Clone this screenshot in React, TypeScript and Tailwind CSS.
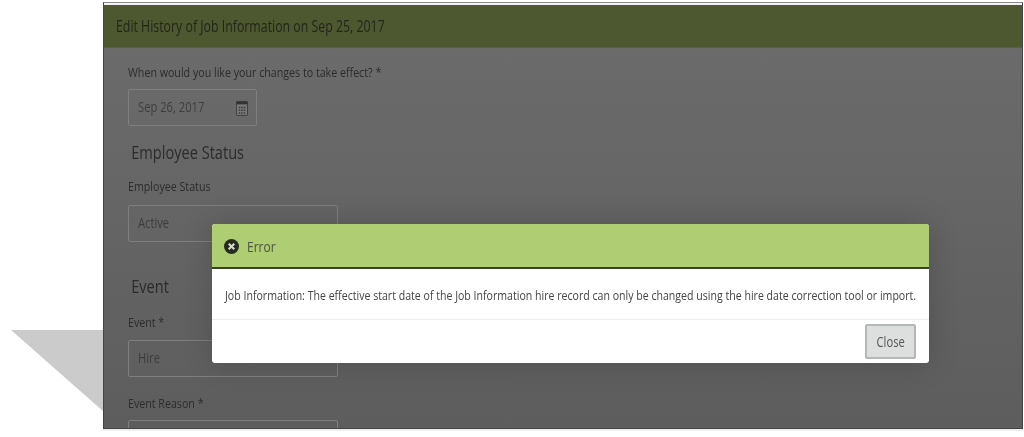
import React from 'react';

const FieldLabel: React.FC<{ text: string; className?: string }> = ({ text, className }) => (
  <div className={`h-[18px] text-[13.5px] leading-[18px] text-[#2c2c2c] whitespace-nowrap origin-left scale-x-[0.79] ${className ?? ''}`}>
    {text}
  </div>
);

const Field: React.FC<{ value: string; width: string; icon?: boolean }> = ({ value, width, icon }) => (
  <div className={`${width} h-[37px] shrink-0 flex items-center justify-between pl-[9px] pr-[8px] pb-[2px] border border-[#7f7f7f] rounded-[2px]`}>
    <span className="text-[14px] text-[#3d3d3d] whitespace-nowrap origin-left scale-x-[0.8]">{value}</span>
    {icon && (
      <svg width="12" height="15" viewBox="0 0 13 16" className="mt-[3px]">
        <rect x="0.5" y="0.5" width="12" height="15" rx="1" fill="#787878" stroke="#3a3a3a" />
        <rect x="0.5" y="0.5" width="12" height="3" fill="#333" />
        <path d="M3 6h1.6v1.6H3zM5.7 6h1.6v1.6H5.7zM8.4 6H10v1.6H8.4zM3 9h1.6v1.6H3zM5.7 9h1.6v1.6H5.7zM8.4 9H10v1.6H8.4zM3 12h1.6v1.6H3zM5.7 12h1.6v1.6H5.7zM8.4 12H10v1.6H8.4z" fill="#3a3a3a" />
      </svg>
    )}
  </div>
);

const SectionTitle: React.FC<{ text: string; className?: string }> = ({ text, className }) => (
  <div className={`pl-[4px] h-[24px] text-[18px] leading-[24px] text-[#2b2b2b] whitespace-nowrap origin-left scale-x-[0.81] ${className ?? ''}`}>
    {text}
  </div>
);

export default function App() {
  return (
    <div className="relative w-[1024px] h-[437px] overflow-hidden bg-white font-['Open_Sans',sans-serif]">
      {/* drop shadow wedge behind the picture */}
      <svg className="absolute left-0 top-0" width="104" height="437" viewBox="0 0 104 437">
        <polygon points="11,330 104,330 104,412" fill="#cbcbcb" />
      </svg>

      <div className="relative ml-[103px] mt-[2px] w-[920px] h-[427px] border-[1.5px] border-[#444444] border-t-[#8a8a8a] overflow-hidden flex flex-col shadow-[0_2px_0_#eeeeee]">
        <div className="h-[2px] shrink-0 bg-[#f2f2f2]" />
        <div className="h-[43px] shrink-0 flex items-center pl-[12px] pt-[1px] bg-[#4d5730] border-b border-[#5a5a55]">
          <span className="text-[15.5px] font-medium text-[#22261a] whitespace-nowrap origin-left scale-x-[0.796] blur-[0.3px]">
            Edit History of Job Information on Sep 25, 2017
          </span>
        </div>

        <div className="flex-1 flex flex-col pl-[24px] bg-gradient-to-b from-[#6b6b6b] to-[#5c5c5c] blur-[0.3px]">
          <FieldLabel text="When would you like your changes to take effect? *" className="mt-[15px]" />
          <div className="mt-[8px]">
            <Field value="Sep 26, 2017" width="w-[129px]" icon />
          </div>
          <SectionTitle text="Employee Status" className="mt-[14px]" />
          <FieldLabel text="Employee Status" className="mt-[13px]" />
          <div className="mt-[10px]">
            <Field value="Active" width="w-[210px]" />
          </div>
          <SectionTitle text="Event" className="mt-[32px]" />
          <FieldLabel text="Event *" className="mt-[15px]" />
          <div className="mt-[9px]">
            <Field value="Hire" width="w-[210px]" />
          </div>
          <FieldLabel text="Event Reason *" className="mt-[17px]" />
          <div className="mt-[8px]">
            <Field value="" width="w-[210px]" />
          </div>
        </div>

        {/* error dialog */}
        <div className="absolute left-[108px] top-[221px] w-[717px] h-[139px] rounded-[3px] overflow-hidden bg-white flex flex-col shadow-[0_0_30px_rgba(0,0,0,0.18)]">
          <div className="h-[45px] shrink-0 flex items-center pl-[12px] pt-[2px] gap-[8px] bg-[#afcd72] border-b-2 border-[#3b4327]">
            <svg width="15" height="15" viewBox="0 0 14 14">
              <circle cx="7" cy="7" r="7" fill="#262b22" />
              <path d="M4.4 4.4l5.2 5.2M9.6 4.4l-5.2 5.2" stroke="#d5dfc4" strokeWidth="1.9" />
            </svg>
            <span className="text-[15px] text-[#4b5540] origin-left scale-x-[0.8] blur-[0.3px]">Error</span>
          </div>
          <div className="h-[51px] shrink-0 flex items-center pl-[13px] pt-[2px] border-b border-[#ececec]">
            <span className="text-[13.5px] text-[#444444] whitespace-nowrap origin-left scale-x-[0.784] blur-[0.3px]">
              Job Information: The effective start date of the Job Information hire record can only be changed using the hire date correction tool or import.
            </span>
          </div>
          <div className="flex-1 flex items-center justify-end pr-[13px]">
            <button className="w-[51px] h-[35px] flex items-center justify-center rounded-[2px] bg-[#dddfdf] border-2 border-[#b3b7b7] text-[14px] text-[#555555]">
              <span className="scale-x-[0.8] blur-[0.3px]">Close</span>
            </button>
          </div>
        </div>
      </div>
    </div>
  );
}
